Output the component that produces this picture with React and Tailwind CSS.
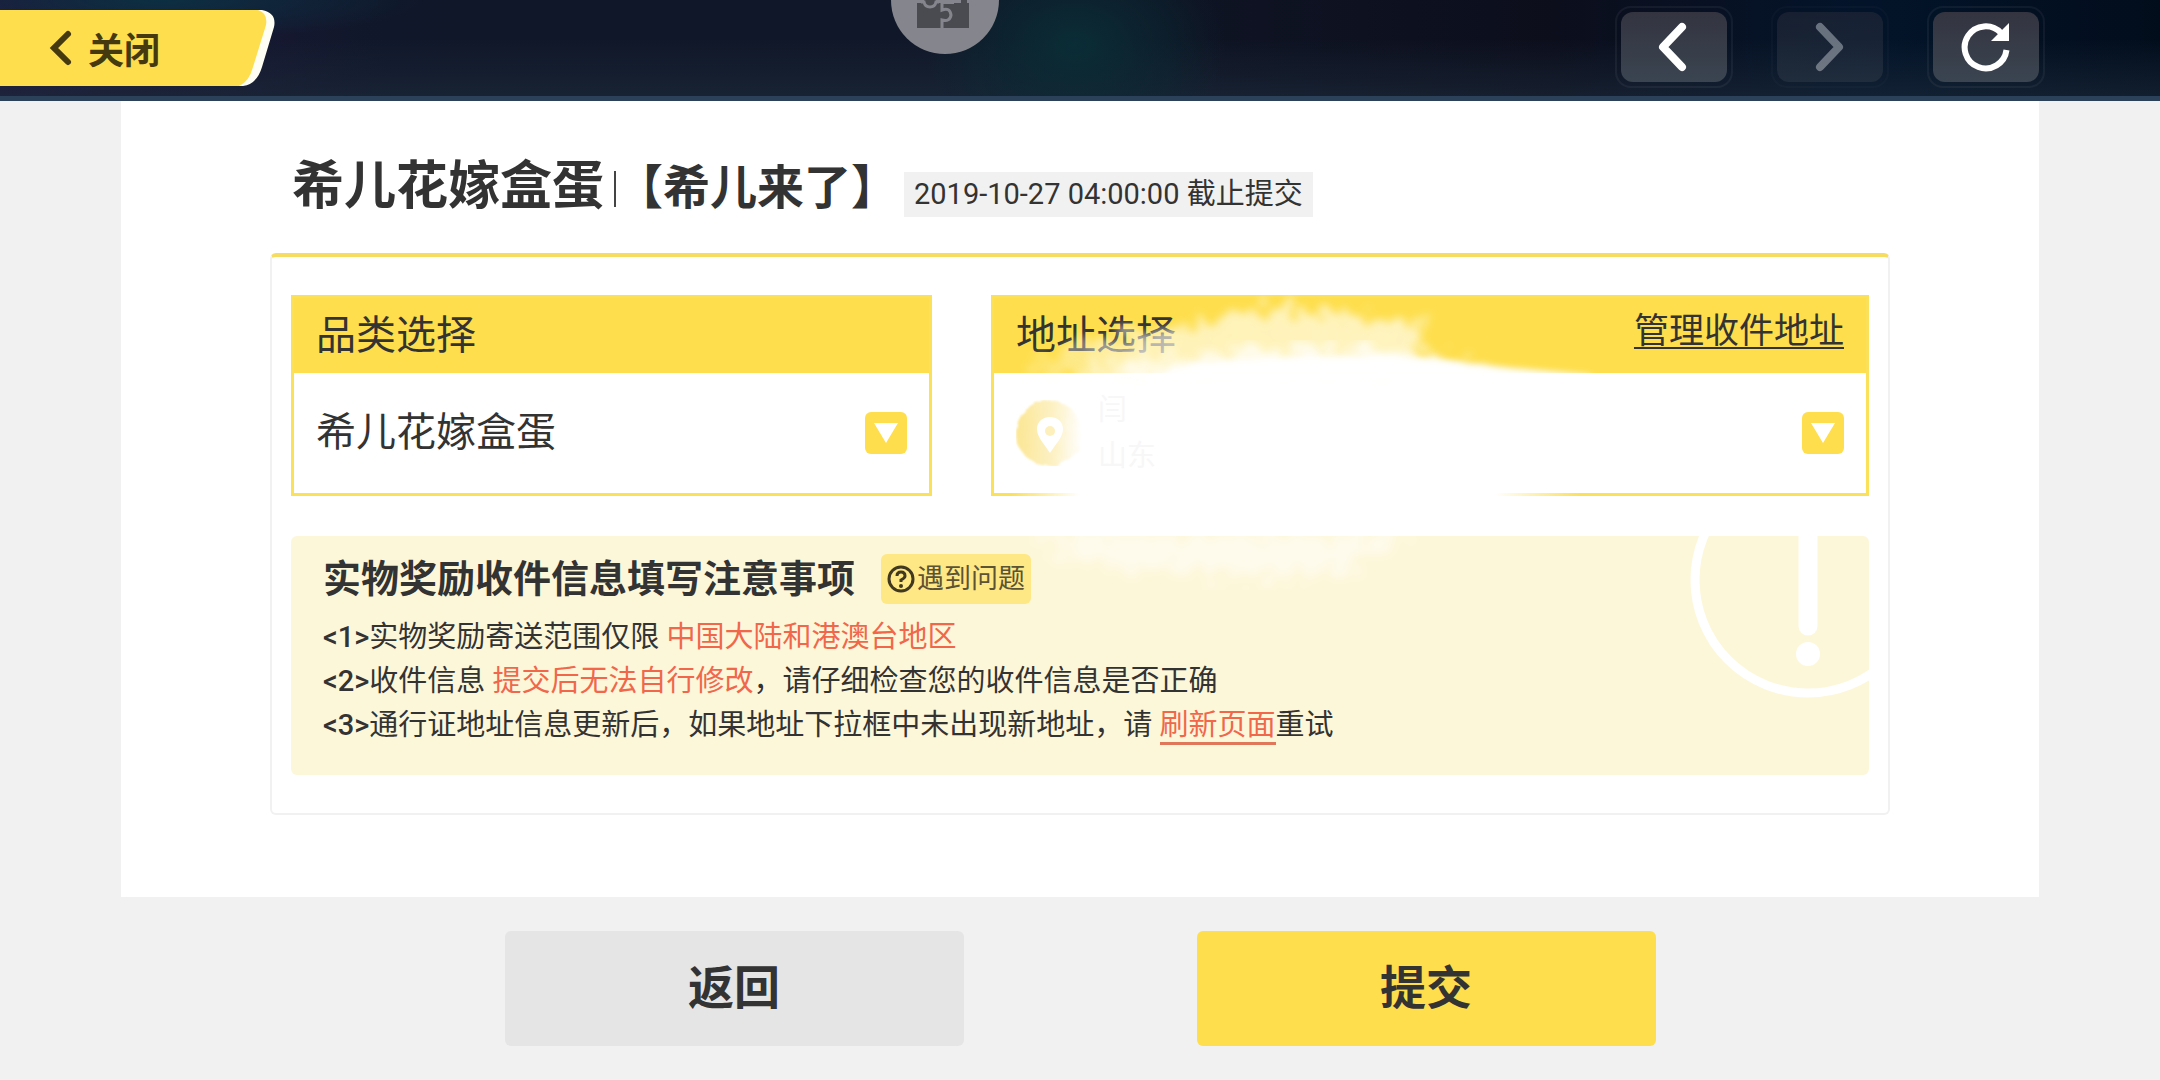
import { useState } from 'react';

const fontStack = "font-['Roboto','Noto_Sans_CJK_SC',sans-serif]";

function CloseTab() {
  return (
    <button type="button" className="relative flex h-[96px] w-[280px] items-center pl-12 text-[#45390f]">
      <svg className="absolute inset-0" width="280" height="96" viewBox="0 0 280 96" aria-hidden="true">
        <path d="M0 10H262Q277 13 274 27L262 67Q257 84 243 86H0Z" fill="#fffef4" />
        <path d="M0 10H258Q268 13 266 25L253 67Q249 82 239 86H0Z" fill="#fede4c" />
      </svg>
      <svg className="relative" width="26" height="38" viewBox="0 0 26 38" fill="none" aria-hidden="true">
        <path d="M20 5L6 19L20 33" stroke="currentColor" strokeWidth="6" strokeLinecap="round" />
      </svg>
      <span className="relative ml-[14px] pt-2 text-[36px] leading-none font-bold">关闭</span>
    </button>
  );
}

function NavButton({ label, disabled, children }) {
  return (
    <button
      type="button"
      aria-label={label}
      disabled={disabled}
      className="rounded-2xl border-2 border-white/5 p-1 disabled:opacity-40"
    >
      <span className="flex h-[70px] w-[106px] items-center justify-center rounded-xl bg-linear-to-b from-[#333440] to-[#3a4551] text-white">
        {children}
      </span>
    </button>
  );
}

function Chevron({ flip }) {
  return (
    <svg width="34" height="50" viewBox="0 0 34 50" fill="none" aria-hidden="true">
      <path
        d={flip ? 'M7 5L26 25L7 45' : 'M25 5L6 25L25 45'}
        stroke="currentColor"
        strokeWidth="8"
        strokeLinecap="round"
        strokeLinejoin="round"
      />
    </svg>
  );
}

function RefreshIcon() {
  return (
    <svg width="50" height="50" viewBox="0 0 50 50" fill="none" aria-hidden="true">
      <path d="M45.5 28A21 21 0 1 1 40 11" stroke="currentColor" strokeWidth="6" />
      <path d="M48 1V19H30Z" fill="currentColor" />
    </svg>
  );
}

function PuzzleBadge() {
  return (
    <svg
      className="absolute top-0 left-[891px]"
      width="108"
      height="54"
      viewBox="0 0 108 54"
      aria-hidden="true"
    >
      <circle cx="54" cy="0" r="54" fill="#85868d" />
      <path d="M26 3H78V28H26Z" fill="#4a4b51" />
      <path d="M50 0H63V4H50Z" fill="#85868d" />
      <path d="M70 0H76V4H70Z" fill="#4a4b51" />
      <path d="M33 0H45V5H33Z" fill="#4a4b51" />
      <path d="M30 2H33Q34 7 39 7Q44 7 45 2H48" stroke="#85868d" strokeWidth="3" fill="none" />
      <path d="M51 3V10Q59 7 60 15Q59 22 51 20V28" stroke="#85868d" strokeWidth="3" fill="none" />
    </svg>
  );
}

function Arrow() {
  return (
    <span className="pointer-events-none flex h-[42px] w-[42px] shrink-0 items-center justify-center rounded-md bg-[#fede4c]">
      <svg width="26" height="22" viewBox="0 0 26 22" aria-hidden="true">
        <path d="M1 1H25L13 21Z" fill="#fff" />
      </svg>
    </span>
  );
}

function Pin() {
  return (
    <svg className="shrink-0" width="66" height="66" viewBox="0 0 66 66" aria-hidden="true">
      <defs>
        <linearGradient id="pinFade" x1="0" y1="0" x2="1" y2="0">
          <stop offset="0" stopColor="#fce693" />
          <stop offset="0.6" stopColor="#fdf2c8" />
          <stop offset="1" stopColor="#ffffff" />
        </linearGradient>
      </defs>
      <circle cx="33" cy="33" r="33" fill="url(#pinFade)" filter="url(#chalk)" />
      <path d="M34 17C26 17 21 22 21 29C21 37 27 42 34 53C41 42 47 37 47 29C47 22 42 17 34 17Z" fill="#fff" />
      <circle cx="34" cy="31" r="5" fill="#fdf0bd" />
    </svg>
  );
}

// white brush stroke over the address
function BrushStroke() {
  return (
    <svg
      className="pointer-events-none absolute -top-[3px] -left-[3px] z-10 overflow-visible"
      width="640"
      height="300"
      viewBox="0 0 640 300"
      aria-hidden="true"
    >
      <defs>
        <filter id="chalk" x="-10%" y="-10%" width="120%" height="120%">
          <feTurbulence type="fractalNoise" baseFrequency="0.09" numOctaves="3" seed="4" result="n" />
          <feDisplacementMap in="SourceGraphic" in2="n" scale="6" />
          <feGaussianBlur stdDeviation="1" />
        </filter>
        <filter id="brush" x="-10%" y="-30%" width="120%" height="160%">
          <feTurbulence type="fractalNoise" baseFrequency="0.07" numOctaves="4" seed="7" result="n" />
          <feDisplacementMap in="SourceGraphic" in2="n" scale="50" xChannelSelector="R" yChannelSelector="G" />
          <feGaussianBlur stdDeviation="4" />
        </filter>
        <filter id="soft" x="-10%" y="-40%" width="120%" height="180%">
          <feGaussianBlur stdDeviation="3" />
        </filter>
        <linearGradient id="veil" x1="0" y1="0" x2="1" y2="0">
          <stop offset="0" stopColor="#fffdf0" stopOpacity="0.2" />
          <stop offset="0.3" stopColor="#fffdf0" stopOpacity="0.65" />
          <stop offset="1" stopColor="#fffdf0" stopOpacity="0.7" />
        </linearGradient>
        <linearGradient id="edge" x1="0" y1="0" x2="1" y2="0">
          <stop offset="0" stopColor="#fff" stopOpacity="0" />
          <stop offset="0.12" stopColor="#fff" />
          <stop offset="0.85" stopColor="#fff" />
          <stop offset="1" stopColor="#fff" stopOpacity="0" />
        </linearGradient>
      </defs>
      <path d="M35 68L90 46L160 38L215 26L290 12L330 16L385 22L428 28L432 76H40Z" fill="url(#veil)" filter="url(#brush)" />
      <path d="M55 84L130 68L200 60L290 54L390 56L460 66L500 82Z" fill="#fff" fillOpacity="0.75" filter="url(#brush)" />
      <path d="M130 84L200 68L300 62L400 61L450 65L520 73L600 80V84Z" fill="#fff" filter="url(#soft)" />
      <rect x="20" y="190" width="570" height="20" fill="url(#edge)" />
      <path d="M40 240L90 265L170 276L300 282L370 268L415 240Z" fill="#fff" fillOpacity="0.5" filter="url(#brush)" />
    </svg>
  );
}

export default function App() {
  const [category, setCategory] = useState('希儿花嫁盒蛋');

  return (
    <div className={`min-h-screen bg-[#f1f1f1] text-[#333] ${fontStack}`}>
      <header className="relative flex h-[101px] items-start justify-between border-b-[5px] border-[#2b4059] bg-[radial-gradient(ellipse_150px_110px_at_1075px_45px,#0a2d36,transparent),radial-gradient(ellipse_260px_40px_at_160px_0px,#0c2f42,transparent),linear-gradient(0deg,#1c2a3a99,transparent_60%),linear-gradient(90deg,#201a3c_0%,#10172a_18%,#101728_45%,#0c0e1c_72%,#03142a_86%,#020d1c_100%)]">
        <CloseTab />
        <PuzzleBadge />
        <nav className="mt-[6px] mr-[115px] flex gap-[38px]" aria-label="浏览">
          <NavButton label="后退">
            <Chevron />
          </NavButton>
          <NavButton label="前进" disabled>
            <Chevron flip />
          </NavButton>
          <NavButton label="刷新">
            <RefreshIcon />
          </NavButton>
        </nav>
      </header>

      <main className="mx-[121px] bg-white px-[149px] pt-[60px] pb-[82px]">
        <div className="flex items-baseline pl-[22px]">
          <h1 className="text-[52px] leading-none font-bold">希儿花嫁盒蛋</h1>
          <span className="ml-[10px] h-[36px] w-[2px] self-center bg-[#444]" />
          <h2 className="text-[47px] leading-none font-bold">【希儿来了】</h2>
          <p className="ml-[6px] bg-[#f1f1f1] px-[10px] text-[29px] leading-[45px]">2019-10-27 04:00:00 截止提交</p>
        </div>

        <section className="mt-9 rounded-md border-2 border-t-4 border-[#f1f1f1] border-t-[#f6dd62] px-[19px] py-[38px]">
          <div className="grid grid-cols-[641fr_878fr] gap-[59px]">
            <div className="border-[3px] border-[#fbe05a]">
              <label htmlFor="category" className="flex h-[75px] items-center bg-[#fede4c] px-[22px] text-[40px] leading-none">
                品类选择
              </label>
              <div className="relative flex h-[120px] items-center">
                <select
                  id="category"
                  value={category}
                  onChange={(e) => setCategory(e.target.value)}
                  className="h-full w-full appearance-none bg-transparent px-[22px] text-[40px] outline-none"
                >
                  <option>希儿花嫁盒蛋</option>
                </select>
                <span className="pointer-events-none absolute right-[22px]">
                  <Arrow />
                </span>
              </div>
            </div>

            <div className="relative border-[3px] border-[#fbe05a]">
              <div className="flex h-[75px] items-center justify-between bg-[#fede4c] px-[22px]">
                <label htmlFor="address" className="text-[40px] leading-none">
                  地址选择
                </label>
                <a href="#address" className="pb-2 text-[35px] leading-none underline decoration-2 underline-offset-4">
                  管理收件地址
                </a>
              </div>
              <div className="flex h-[120px] items-center px-[22px]">
                <Pin />
                <div className="ml-4 text-[29px] leading-[46px] text-[#f7f7f7]">
                  <p>闫</p>
                  <p>山东</p>
                </div>
                <select id="address" className="h-full flex-1 appearance-none bg-transparent outline-none">
                  <option value="" aria-label="地址"></option>
                </select>
                <Arrow />
              </div>
              <BrushStroke />
            </div>
          </div>

          <div className="relative mt-10 overflow-hidden rounded-md bg-[#fdf7da] px-8 pt-[18px] pb-[28px]">
            <svg className="absolute top-0 right-0" width="180" height="170" viewBox="0 0 180 170" aria-hidden="true">
              <circle cx="119" cy="44" r="113" fill="none" stroke="#fff" strokeWidth="9" />
              <path d="M119 -20V90" stroke="#fff" strokeWidth="19" strokeLinecap="round" />
              <circle cx="119" cy="118" r="12" fill="#fff" />
            </svg>
            <div className="flex items-center">
              <h3 className="text-[38px] leading-none font-bold">实物奖励收件信息填写注意事项</h3>
              <button
                type="button"
                className="ml-[26px] flex h-[50px] items-center gap-[2px] rounded-md bg-[#fee785] px-[6px] text-[27px] leading-none text-[#5c5334]"
              >
                <svg width="28" height="28" viewBox="0 0 28 28" fill="none" aria-hidden="true">
                  <circle cx="14" cy="14" r="12" stroke="#40391f" strokeWidth="3" />
                  <path d="M10 11Q10 7 14 7Q18 7 18 11Q18 13 14 15V17" stroke="#40391f" strokeWidth="3" />
                  <circle cx="14" cy="21" r="2" fill="#40391f" />
                </svg>
                遇到问题
              </button>
            </div>
            <div className="mt-[11px] text-[29px] leading-[44px]">
              <p>
                <span className="font-medium">&lt;1&gt;</span>实物奖励寄送范围仅限 <span className="text-[#f0674c]">中国大陆和港澳台地区</span>
              </p>
              <p>
                <span className="font-medium">&lt;2&gt;</span>收件信息 <span className="text-[#f0674c]">提交后无法自行修改</span>，请仔细检查您的收件信息是否正确
              </p>
              <p>
                <span className="font-medium">&lt;3&gt;</span>通行证地址信息更新后，如果地址下拉框中未出现新地址，请{' '}
                <a href="#refresh" className="border-b-3 border-[#e0765a] text-[#f0674c]">
                  刷新页面
                </a>
                重试
              </p>
            </div>
          </div>
        </section>
      </main>

      <footer className="flex justify-center gap-[233px] py-[34px]">
        <button type="button" className="h-[115px] w-[459px] rounded-md bg-[#e5e5e5] text-[46px] font-bold">
          返回
        </button>
        <button type="button" className="h-[115px] w-[459px] rounded-md bg-[#fede4c] text-[46px] font-bold">
          提交
        </button>
      </footer>
    </div>
  );
}
